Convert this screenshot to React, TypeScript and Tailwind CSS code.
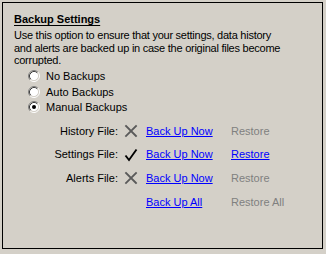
import React from "react";

const font = { fontFamily: '"Liberation Sans", Arial, sans-serif' };

function Radio({ checked }: { checked?: boolean }) {
  return (
    <svg width="12" height="12" viewBox="0 0 12 12" className="shrink-0">
      <circle cx="6" cy="6" r="4.5" fill="#ffffff" />
      <path d="M2.11 9.89 A5.5 5.5 0 0 1 9.89 2.11" fill="none" stroke="#808080" strokeWidth="1" />
      <path d="M9.89 2.11 A5.5 5.5 0 0 1 2.11 9.89" fill="none" stroke="#ffffff" strokeWidth="1" />
      <path d="M2.82 9.18 A4.5 4.5 0 0 1 9.18 2.82" fill="none" stroke="#404040" strokeWidth="1" />
      <path d="M9.18 2.82 A4.5 4.5 0 0 1 2.82 9.18" fill="none" stroke="#d4d0c8" strokeWidth="1" />
      {checked ? <circle cx="6" cy="6" r="2" fill="#000000" /> : null}
    </svg>
  );
}

function Cross() {
  return (
    <svg width="14" height="14" viewBox="0 0 14 14">
      <path d="M2 2 L12 12 M12 2 L2 12" stroke="#5a5a5a" strokeWidth="1.8" strokeLinecap="square" />
    </svg>
  );
}

function Check() {
  return (
    <svg width="14" height="14" viewBox="0 0 14 14">
      <path d="M1.5 7.5 L5 12 L12.5 1.5" fill="none" stroke="#000000" strokeWidth="1.9" strokeLinejoin="miter" />
    </svg>
  );
}

const files = [
  { label: "History File:", ok: false, canRestore: false },
  { label: "Settings File:", ok: true, canRestore: true },
  { label: "Alerts File:", ok: false, canRestore: false },
];

export default function App() {
  return (
    <div className="w-[326px] h-[254px] bg-[#d4d0c8] pl-[2px] pt-[2px] text-[11px] text-black" style={font}>
      <div className="w-[321px] h-[247px] border border-black pl-[11px] pt-[10px]">
        <p className="font-bold underline leading-[13px] underline-offset-[2px]">Backup Settings</p>
        <p className="mt-[3px] leading-[12.5px] w-[270px] tracking-[-0.25px]">
          Use this option to ensure that your settings, data history and alerts are backed up in case the original files become corrupted.
        </p>

        <div className="mt-[2px] pl-[14px] flex flex-col">
          {["No Backups", "Auto Backups", "Manual Backups"].map((label, i) => (
            <label key={label} className="flex items-center gap-[6px] h-[15.5px]">
              <Radio checked={i === 2} />
              <span>{label}</span>
            </label>
          ))}
        </div>

        <div className="mt-[4px] grid grid-cols-[110px_14px_93px_auto] auto-rows-[23.7px] items-center">
          {files.map((f) => (
            <React.Fragment key={f.label}>
              <span className="text-right pr-[6px]">{f.label}</span>
              <span className="flex items-center">{f.ok ? <Check /> : <Cross />}</span>
              <a className="pl-[8px] text-[#0000ff] underline">Back Up Now</a>
              <span className={f.canRestore ? "text-[#0000ff] underline" : "text-[#808080]"}>Restore</span>
            </React.Fragment>
          ))}
          <span />
          <span />
          <a className="pl-[8px] text-[#0000ff] underline">Back Up All</a>
          <span className="text-[#808080]">Restore All</span>
        </div>
      </div>
    </div>
  );
}
